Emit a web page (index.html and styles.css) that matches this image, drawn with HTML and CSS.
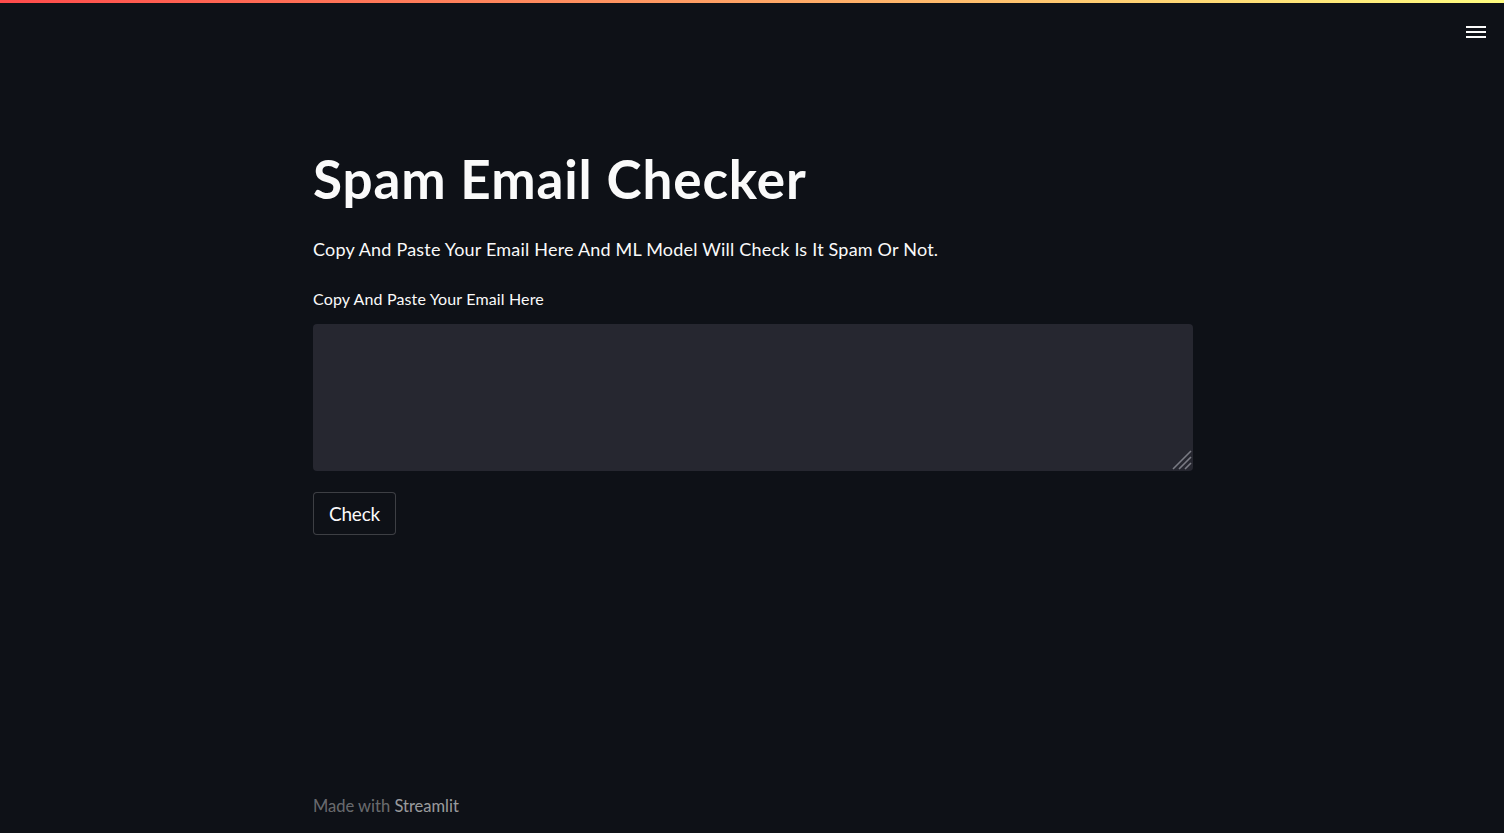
FILE: index.html
```html
<!DOCTYPE html>
<html lang="en">
<head>
<meta charset="utf-8">
<title>Spam Email Checker</title>
<link rel="stylesheet" href="styles.css">
</head>
<body>
<div class="decoration"></div>
<header class="toolbar">
  <button class="menu" aria-label="Main menu">
    <svg width="20" height="12" viewBox="0 0 20 12"><rect x="0" y="0" width="20" height="2" fill="#fafafa"/><rect x="0" y="5" width="20" height="2" fill="#fafafa"/><rect x="0" y="10" width="20" height="2" fill="#fafafa"/></svg>
  </button>
</header>
<main class="main">
  <div class="block">
    <h1 class="title">Spam Email Checker</h1>
    <p class="subtitle">Copy And Paste Your Email Here And ML Model Will Check Is It Spam Or Not.</p>
    <div class="field">
      <label class="label" for="email">Copy And Paste Your Email Here</label>
      <div class="textwrap">
        <textarea id="email" class="textarea"></textarea>
        <svg class="grip" width="20" height="20" viewBox="0 0 20 20"><path d="M19 1 L1 19 M19 7 L7 19 M19 13 L13 19" stroke="#7a7b84" stroke-width="1.6" fill="none"/></svg>
      </div>
    </div>
    <div><button class="check">Check</button></div>
  </div>
  <footer class="footer">Made with <span class="brand">Streamlit</span></footer>
</main>
</body>
</html>
```
FILE: styles.css
```css
* { box-sizing: border-box; }
html, body { margin: 0; padding: 0; height: 100%; }
body {
  background: #0e1117;
  color: #fafafa;
  font-family: "Lato", "Liberation Sans", sans-serif;
  overflow: hidden;
}
.decoration {
  height: 3px;
  background: linear-gradient(90deg, #ff4b4b, #fffd80);
}
.toolbar {
  position: fixed;
  top: 26px;
  right: 18px;
}
.menu {
  background: none;
  border: none;
  padding: 0;
  cursor: pointer;
  display: flex;
}
.main {
  height: calc(100% - 3px);
  display: flex;
  flex-direction: column;
  align-items: center;
}
.block {
  width: 880px;
  margin-left: 2px;
  padding-top: 143px;
  flex: 1;
  display: flex;
  flex-direction: column;
}
.title {
  margin: 0;
  font-size: 53px;
  font-weight: 700;
  line-height: 66px;
  letter-spacing: 0.9px;
}
.subtitle {
  margin: 23px 0 0;
  font-size: 18px;
  line-height: 28px;
  letter-spacing: 0.2px;
}
.field {
  margin-top: 25px;
  display: flex;
  flex-direction: column;
}
.label {
  font-size: 16px;
  line-height: 22px;
  letter-spacing: 0.15px;
  margin-bottom: 14px;
}
.textwrap {
  position: relative;
  display: flex;
}
.textarea {
  width: 880px;
  height: 147px;
  background: #262730;
  border: none;
  border-radius: 4px;
  color: #fafafa;
  padding: 12px;
  font: inherit;
  outline: none;
  resize: none;
}
.grip {
  position: absolute;
  right: 1px;
  bottom: 1px;
  pointer-events: none;
}
.check {
  margin-top: 21px;
  height: 43px;
  width: 83px;
  background: #0e1117;
  color: #fafafa;
  border: 1px solid rgba(250, 250, 250, 0.2);
  border-radius: 4px;
  font-family: inherit;
  font-size: 19px;
  letter-spacing: -0.2px;
  padding: 0;
}
.footer {
  width: 880px;
  margin-left: 2px;
  font-size: 16.5px;
  line-height: 24px;
  color: rgba(250, 250, 250, 0.4);
  padding-bottom: 15px;
}
.brand { color: rgba(250, 250, 250, 0.6); }
```
